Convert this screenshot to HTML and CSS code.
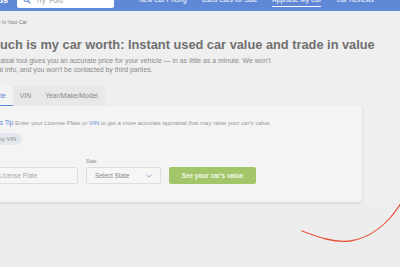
FILE: index.html
```html
<!DOCTYPE html>
<html lang="en">
<head>
	<meta charset="UTF-8">
	<title>Appraise My Car</title>
<link rel="stylesheet" href="styles.css">
</head>
<body>

<div class="topbar">
	<a href="#" class="logo">edmunds</a>
	<div class="search">
		<svg class="search-icon" width="8" height="8" viewBox="0 0 8 8"><circle cx="3.2" cy="3.2" r="2.3" fill="none" stroke="#5f89d6" stroke-width="1.1"/><path d="M5 5L7.3 7.3" stroke="#5f89d6" stroke-width="1.2"/></svg>
		<span class="search-text">Try "Ford"</span>
	</div>
	<ul class="nav">
		<li><a href="#">New Car Pricing</a></li>
		<li><a href="#">Used Cars for Sale</a></li>
		<li><a href="#" class="nav-selected">Appraise My Car</a></li>
		<li><a href="#">Car Reviews</a></li>
	</ul>
</div>

<div class="main">
	<div class="crumbs">Sell/Trade In Your Car</div>
	<h1 class="title">How much is my car worth: Instant used car value and trade in value</h1>
	<p class="intro">Edmunds' appraisal tool gives you an accurate price for your vehicle — in as little as a minute. We won't<br>ask for personal info, and you won't be contacted by third parties.</p>

	<div class="tabs">
		<span class="tab tab-selected">License Plate</span>
		<span class="tab">VIN</span>
		<span class="tab">Year/Make/Model</span>
	</div>
	<div class="card">
		<p class="tip"><b>Edmunds Tip</b> Enter your License Plate or <a href="#">VIN</a> to get a more accurate appraisal that may raise your car's value.</p>
		<span class="pill">What's my VIN</span>
		<div class="form">
			<div class="input plate">License Plate</div>
			<div class="field">
				<label>State</label>
				<div class="input select">Select State
					<svg width="6" height="4" viewBox="0 0 6 4"><path d="M0.6 0.8L3 3L5.4 0.8" fill="none" stroke="#7d97c8" stroke-width="0.8"/></svg>
				</div>
			</div>
			<a href="#" class="btn">See your car's value</a>
		</div>
	</div>
</div>

<svg class="swoosh" width="400" height="267" viewBox="0 0 400 267"><path d="M302 231C318 237 334 243 350 241C370 238 388 224 401 203" fill="none" stroke="#e9553c" stroke-width="1.3" stroke-linecap="round"/></svg>

</body>
</html>
```

FILE: styles.css
```css
*{margin:0;padding:0;box-sizing:border-box;}
body{background:#ededed;font-family:"Liberation Sans",Arial,sans-serif;width:400px;height:267px;overflow:hidden;}
a{text-decoration:none;color:inherit;}
ul{list-style:none;}

/* 顶部导航 */
.topbar{display:flex;align-items:center;height:22px;margin-top:-11px;background:#5f89d6;color:#fff;}
.topbar .logo{font-size:9px;font-weight:bold;margin-left:-32px;}
.topbar .search{display:flex;align-items:center;width:97px;height:16px;margin-left:9px;background:#fff;border-radius:2px;}
.topbar .search-icon{margin-left:6px;}
.topbar .search-text{margin-left:5px;font-size:6.6px;color:#999;}
.topbar .nav{display:flex;gap:15px;margin-left:25px;font-size:6.6px;}
.topbar .nav a{display:block;padding:3px 0;}
.topbar .nav .nav-selected{border-bottom:1px solid #fff;}

.main{margin-left:-42px;background:#efefef;}
.crumbs{font-size:5px;color:#777;padding:8px 0 0 20px;line-height:7px;}
.title{font-size:12.8px;color:#707070;margin-top:11px;line-height:15px;}
.intro{font-size:6.9px;color:#8a8a8a;line-height:9px;margin:4px 0 0 -4px;}

/* 选项卡 */
.tabs{display:inline-flex;margin-top:12px;background:#e8e8e8;border-radius:0 3px 0 0;font-size:6.8px;color:#888;}
.tab{padding:6px 7px 5px;line-height:8px;}
.tab-selected{background:#f3f3f3;color:#5f89d6;border-bottom:1px solid #5f89d6;}

.card{width:404px;background:#f4f4f4;border-radius:0 3px 3px 3px;padding:13px 0 18px 24px;box-shadow:0 1px 3px rgba(0,0,0,.12);}
.tip{font-size:6px;color:#999;line-height:7px;margin-left:-6px;}
.tip b{font-weight:normal;color:#5f89d6;font-size:6.4px;}
.tip a{color:#5f89d6;}
.pill{display:inline-block;margin:4px 0 0 -10px;padding:3px 6px;background:#e4e7ed;border-radius:6px;font-size:5.8px;color:#888;line-height:6px;}
.form{display:flex;align-items:flex-end;gap:8px;margin:14px 0 0 13px;}
.field label{display:block;font-size:4.5px;color:#888;margin-bottom:3px;}
.input{display:flex;align-items:center;justify-content:space-between;height:17px;background:#f6f6f6;border:1px solid #dedede;border-radius:2px;padding:0 8px;font-size:6.4px;color:#aaa;}
.plate{width:88px;margin-left:-5px;}
.select{width:75px;color:#888;}
.btn{display:block;width:87px;height:17px;line-height:17px;text-align:center;background:#a3c66a;border-radius:2px;color:#f4f8ea;font-size:6.4px;font-weight:bold;}

.swoosh{position:absolute;left:0;top:0;pointer-events:none;}
```
